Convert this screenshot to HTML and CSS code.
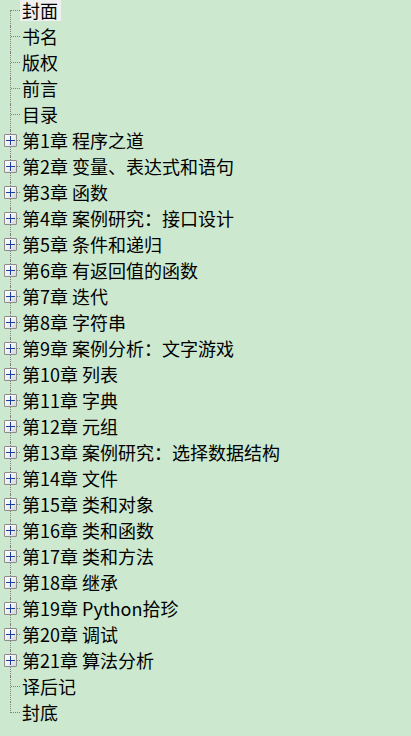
FILE: index.html
```html
<!DOCTYPE html>
<html lang="zh-CN">
<head>
<meta charset="utf-8">
<title>目录</title>
<link rel="stylesheet" href="styles.css">
</head>
<body>
<ul class="tree">
  <li class="node first"><span class="gutter"></span><span class="label selected">封面</span></li>
  <li class="node"><span class="gutter"></span><span class="label">书名</span></li>
  <li class="node"><span class="gutter"></span><span class="label">版权</span></li>
  <li class="node"><span class="gutter"></span><span class="label">前言</span></li>
  <li class="node"><span class="gutter"></span><span class="label">目录</span></li>
  <li class="node parent"><span class="gutter"><span class="box"></span></span><span class="label">第1章 程序之道</span></li>
  <li class="node parent"><span class="gutter"><span class="box"></span></span><span class="label">第2章 变量、表达式和语句</span></li>
  <li class="node parent"><span class="gutter"><span class="box"></span></span><span class="label">第3章 函数</span></li>
  <li class="node parent"><span class="gutter"><span class="box"></span></span><span class="label">第4章 案例研究：接口设计</span></li>
  <li class="node parent"><span class="gutter"><span class="box"></span></span><span class="label">第5章 条件和递归</span></li>
  <li class="node parent"><span class="gutter"><span class="box"></span></span><span class="label">第6章 有返回值的函数</span></li>
  <li class="node parent"><span class="gutter"><span class="box"></span></span><span class="label">第7章 迭代</span></li>
  <li class="node parent"><span class="gutter"><span class="box"></span></span><span class="label">第8章 字符串</span></li>
  <li class="node parent"><span class="gutter"><span class="box"></span></span><span class="label">第9章 案例分析：文字游戏</span></li>
  <li class="node parent"><span class="gutter"><span class="box"></span></span><span class="label">第10章 列表</span></li>
  <li class="node parent"><span class="gutter"><span class="box"></span></span><span class="label">第11章 字典</span></li>
  <li class="node parent"><span class="gutter"><span class="box"></span></span><span class="label">第12章 元组</span></li>
  <li class="node parent"><span class="gutter"><span class="box"></span></span><span class="label">第13章 案例研究：选择数据结构</span></li>
  <li class="node parent"><span class="gutter"><span class="box"></span></span><span class="label">第14章 文件</span></li>
  <li class="node parent"><span class="gutter"><span class="box"></span></span><span class="label">第15章 类和对象</span></li>
  <li class="node parent"><span class="gutter"><span class="box"></span></span><span class="label">第16章 类和函数</span></li>
  <li class="node parent"><span class="gutter"><span class="box"></span></span><span class="label">第17章 类和方法</span></li>
  <li class="node parent"><span class="gutter"><span class="box"></span></span><span class="label">第18章 继承</span></li>
  <li class="node parent"><span class="gutter"><span class="box"></span></span><span class="label">第19章 Python拾珍</span></li>
  <li class="node parent"><span class="gutter"><span class="box"></span></span><span class="label">第20章 调试</span></li>
  <li class="node parent"><span class="gutter"><span class="box"></span></span><span class="label">第21章 算法分析</span></li>
  <li class="node"><span class="gutter"></span><span class="label">译后记</span></li>
  <li class="node last"><span class="gutter"></span><span class="label">封底</span></li>
</ul>
</body>
</html>
```

FILE: styles.css
```css
html, body {
  margin: 0;
  padding: 0;
  background: #cce8cf;
}

body {
  width: 411px;
  height: 736px;
  overflow: hidden;
  font-family: "Noto Sans CJK SC", "Microsoft YaHei", sans-serif;
  font-size: 18px;
  color: #000;
}

.tree {
  list-style: none;
  margin: 0;
  padding: 0;
}

.node {
  display: flex;
  align-items: flex-start;
  height: 26px;
}

.gutter {
  position: relative;
  flex: 0 0 20px;
  width: 20px;
  height: 26px;
}

/* vertical connector */
.gutter::before {
  content: "";
  position: absolute;
  left: 10px;
  top: 0;
  height: 26px;
  border-left: 1px dotted #808080;
}

.first .gutter::before {
  top: 10px;
  height: 16px;
}

.last .gutter::before {
  height: 11px;
}

/* horizontal connector */
.gutter::after {
  content: "";
  position: absolute;
  left: 11px;
  top: 10px;
  width: 9px;
  border-top: 1px dotted #808080;
}

.box {
  position: absolute;
  left: 4px;
  top: 4px;
  width: 11px;
  height: 11px;
  border: 1px solid #8c8c8c;
  border-radius: 1px;
  background: linear-gradient(135deg, #ffffff 0%, #f0f0f0 50%, #d4d4d4 100%);
  z-index: 1;
}

.box::before {
  content: "";
  position: absolute;
  left: 1px;
  top: 5px;
  width: 9px;
  height: 1px;
  background: #1a3d96;
}

.box::after {
  content: "";
  position: absolute;
  left: 5px;
  top: 1px;
  width: 1px;
  height: 9px;
  background: #1a3d96;
}

.label {
  display: block;
  line-height: 21px;
  padding: 0 3px 0 2px;
  white-space: nowrap;
}

.selected {
  background: #f0f0f0;
}
```
